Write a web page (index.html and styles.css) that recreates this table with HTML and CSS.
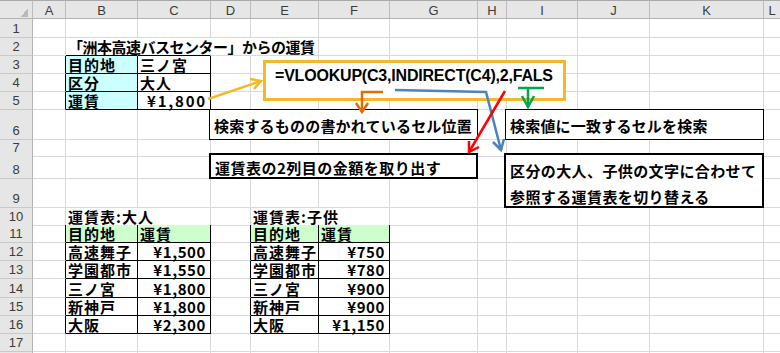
FILE: index.html
```html
<!DOCTYPE html>
<html lang="ja">
<head>
<meta charset="utf-8">
<title>VLOOKUP INDIRECT</title>
<link rel="stylesheet" href="styles.css">
</head>
<body>
<div class="sheet">
  <div class="row hd h19"><div class="corner"></div><div>A</div><div>B</div><div>C</div><div>D</div><div>E</div><div>F</div><div>G</div><div>H</div><div>I</div><div>J</div><div>K</div><div>L</div></div>
  <div class="row h19"><div class="rh">1</div><div></div><div></div><div></div><div></div><div></div><div></div><div></div><div></div><div></div><div></div><div></div><div></div></div>
  <div class="row h18"><div class="rh">2</div><div></div><div class="ov kb title">「洲本高速バスセンター」からの運賃</div><div class="ov kb"></div><div class="ov"></div><div></div><div></div><div></div><div></div><div></div><div></div><div></div><div></div></div>
  <div class="row h18"><div class="rh">3</div><div class="kr"></div><div class="k cy">目的地</div><div class="k">三ノ宮</div><div></div><div></div><div></div><div></div><div></div><div></div><div></div><div></div><div></div></div>
  <div class="row h18"><div class="rh">4</div><div class="kr"></div><div class="k cy">区分</div><div class="k">大人</div><div></div><div></div><div></div><div></div><div></div><div></div><div></div><div></div><div></div></div>
  <div class="row h18"><div class="rh">5</div><div class="kr"></div><div class="k cy">運賃</div><div class="k num wide">¥1,800</div><div></div><div></div><div></div><div></div><div></div><div></div><div></div><div></div><div></div></div>
  <div class="row h30"><div class="rh">6</div><div></div><div></div><div></div><div></div><div></div><div></div><div></div><div></div><div></div><div></div><div></div><div></div></div>
  <div class="row h15"><div class="rh">7</div><div></div><div></div><div></div><div></div><div></div><div></div><div></div><div></div><div></div><div></div><div></div><div></div></div>
  <div class="row h24"><div class="rh">8</div><div></div><div></div><div></div><div></div><div></div><div></div><div></div><div></div><div></div><div></div><div></div><div></div></div>
  <div class="row h29"><div class="rh">9</div><div></div><div></div><div></div><div></div><div></div><div></div><div></div><div></div><div></div><div></div><div></div><div></div></div>
  <div class="row h17"><div class="rh">10</div><div></div><div class="ov kb">運賃表:大人</div><div class="kb"></div><div></div><div class="ov kb">運賃表:子供</div><div class="kb"></div><div></div><div></div><div></div><div></div><div></div><div></div></div>
  <div class="row h18"><div class="rh">11</div><div class="kr"></div><div class="k gr">目的地</div><div class="k gr">運賃</div><div class="kr"></div><div class="k gr">目的地</div><div class="k gr">運賃</div><div></div><div></div><div></div><div></div><div></div><div></div></div>
  <div class="row h18"><div class="rh">12</div><div class="kr"></div><div class="k">高速舞子</div><div class="k num">¥1,500</div><div class="kr"></div><div class="k">高速舞子</div><div class="k num">¥750</div><div></div><div></div><div></div><div></div><div></div><div></div></div>
  <div class="row h18"><div class="rh">13</div><div class="kr"></div><div class="k">学園都市</div><div class="k num">¥1,550</div><div class="kr"></div><div class="k">学園都市</div><div class="k num">¥780</div><div></div><div></div><div></div><div></div><div></div><div></div></div>
  <div class="row h19"><div class="rh">14</div><div class="kr"></div><div class="k">三ノ宮</div><div class="k num">¥1,800</div><div class="kr"></div><div class="k">三ノ宮</div><div class="k num">¥900</div><div></div><div></div><div></div><div></div><div></div><div></div></div>
  <div class="row h18"><div class="rh">15</div><div class="kr"></div><div class="k">新神戸</div><div class="k num">¥1,800</div><div class="kr"></div><div class="k">新神戸</div><div class="k num">¥900</div><div></div><div></div><div></div><div></div><div></div><div></div></div>
  <div class="row h18"><div class="rh">16</div><div class="kr"></div><div class="k">大阪</div><div class="k num">¥2,300</div><div class="kr"></div><div class="k">大阪</div><div class="k num">¥1,150</div><div></div><div></div><div></div><div></div><div></div><div></div></div>
  <div class="row h18"><div class="rh">17</div><div></div><div></div><div></div><div></div><div></div><div></div><div></div><div></div><div></div><div></div><div></div><div></div></div>
  <div class="row h18"><div class="rh">18</div><div></div><div></div><div></div><div></div><div></div><div></div><div></div><div></div><div></div><div></div><div></div><div></div></div>

  <div class="formula">=VLOOKUP(C3,INDIRECT(C4),2,FALS</div>
  <div class="note n1">検索するものの書かれているセル位置</div>
  <div class="note thick n2">運賃表の2列目の金額を取り出す</div>
  <div class="note n3">検索値に一致するセルを検索</div>
  <div class="note thick n4">区分の大人、子供の文字に合わせて<br>参照する運賃表を切り替える</div>

  <svg class="arrows" width="780" height="353" viewBox="0 0 780 353" aria-hidden="true">
    <g fill="none" stroke-width="2.5" stroke-linejoin="miter">
      <g stroke="#f4b828">
        <path d="M208 99 L261 81"/>
        <path d="M250 79 L261 81 L254 89"/>
      </g>
      <g stroke="#e36c0a">
        <path d="M383 92 H362 V112"/>
        <path d="M356 103 L362 112 L368 103"/>
      </g>
      <g stroke="#4f81bd">
        <path d="M395 90 L486 92 L501 150"/>
        <path d="M493 142 L501 150 L504 139"/>
      </g>
      <g stroke="#ff0000">
        <path d="M505 91 L469 152"/>
        <path d="M469 141 L469 152 L479 147"/>
      </g>
      <g stroke="#00a550">
        <path d="M518 88 H544 M528 88 V107"/>
        <path d="M522 96 L528 107 L534 96"/>
      </g>
    </g>
  </svg>
</div>
</body>
</html>
```
FILE: styles.css
```css
html, body {
  margin: 0;
  padding: 0;
  background: #ffffff;
}
body {
  width: 780px;
  height: 353px;
  overflow: hidden;
}
.sheet {
  position: relative;
  width: 780px;
  height: 353px;
  overflow: hidden;
  font-family: "Noto Sans CJK JP", sans-serif;
  color: #000;
}
.row {
  display: grid;
  grid-template-columns: 33px 33px 72px 73px 40px 68px 71px 88px 29px 71px 72px 114px 17px;
}
.row > div {
  box-sizing: border-box;
  min-width: 0;
  border-right: 1px solid #d9d9d9;
  border-bottom: 1px solid #d9d9d9;
  display: flex;
  align-items: flex-end;
  padding: 0 2px;
  font-size: 15px;
  line-height: 17px;
  font-weight: 700;
  letter-spacing: 1px;
  white-space: nowrap;
}
.h15 { height: 15px; }
.h17 { height: 17px; }
.h18 { height: 18px; }
.h19 { height: 19px; }
.h24 { height: 24px; }
.h29 { height: 29px; }
.h30 { height: 30px; }

/* headers */
.hd > div {
  background: #e6e6e6;
  border-top: 1px solid #a9a9a9;
  border-right-color: #bcbcbc;
  border-bottom-color: #b3b3b3;
  justify-content: center;
  align-items: center;
  padding-top: 3px;
  font-family: "Liberation Sans", sans-serif;
  font-weight: 400;
  font-size: 13px;
  line-height: 14px;
  letter-spacing: 0;
  color: #3c3c3c;
}
.hd > .corner {
  background: linear-gradient(135deg, transparent 50%, #b9b9b9 50%) right 4px bottom 1px / 8px 8px no-repeat #e6e6e6;
}
.row > .rh {
  background: #e6e6e6;
  border-right-color: #b3b3b3;
  border-bottom-color: #c9c9c9;
  justify-content: center;
  font-family: "Liberation Sans", sans-serif;
  font-weight: 400;
  font-size: 13px;
  line-height: 15px;
  letter-spacing: 0;
  color: #3c3c3c;
  padding-bottom: 1px;
}

/* cell borders and fills */
.row > .k { border-right-color: #000; border-bottom-color: #000; }
.row > .kr { border-right-color: #000; }
.row > .kb { border-bottom-color: #000; }
.row > .ov { border-right-color: transparent; }
.cy { background: #ccffff; }
.gr { background: #ccffcc; }
.row > .num {
  justify-content: flex-end;
  padding-right: 4px;
  letter-spacing: 0.6px;
}
.row > .wide { letter-spacing: 1.8px; padding-right: 3px; }
.row > .title { letter-spacing: -0.5px; }

/* floating shapes */
.formula {
  position: absolute;
  left: 263px;
  top: 60px;
  width: 303px;
  height: 41px;
  box-sizing: border-box;
  border: 3px solid #f4b828;
  background: #fff;
  padding: 4px 0 0 9px;
  font-family: "Liberation Sans", Arial, sans-serif;
  font-weight: 700;
  font-size: 16px;
  line-height: 18px;
  letter-spacing: -0.2px;
  white-space: nowrap;
  overflow: hidden;
}
.note {
  position: absolute;
  box-sizing: border-box;
  background: #fff;
  border: 1px solid #000;
  padding: 2px 0 0 4px;
  display: flex;
  align-items: center;
  font-weight: 700;
  font-size: 15px;
  letter-spacing: 0.2px;
  white-space: nowrap;
}
.note.thick { border-width: 2px; padding-top: 3px; }
.n1 { left: 209px; top: 109px; width: 269px; height: 31px; }
.n2 { left: 209px; top: 153px; width: 269px; height: 26px; letter-spacing: 0.5px; }
.n3 { left: 505px; top: 109px; width: 259px; height: 31px; }
.n4 {
  left: 504px;
  top: 153px;
  width: 260px;
  height: 55px;
  display: block;
  padding-top: 0;
  line-height: 26px;
  letter-spacing: 0.4px;
}
.arrows {
  position: absolute;
  left: 0;
  top: 0;
  pointer-events: none;
}
```
